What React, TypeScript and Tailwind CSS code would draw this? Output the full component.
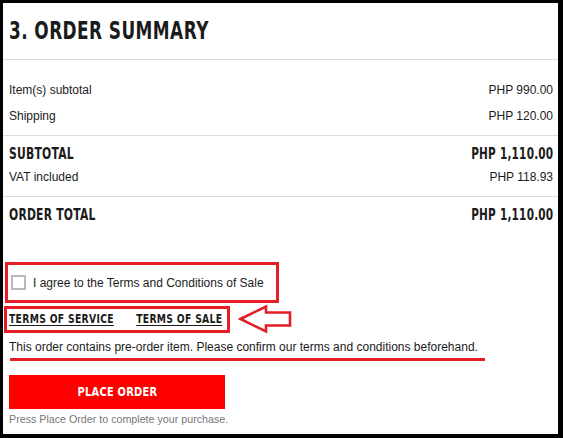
const bold = "font-['DejaVu_Sans',sans-serif] font-bold text-[#1b1b1b]";

// condensed look: DejaVu Bold squeezed horizontally
const Cond = ({ children, className = "" }: { children: React.ReactNode; className?: string }) => (
  <span className={`inline-block ${className}`}>{children}</span>
);

const Row = ({ label, value, strong }: { label: string; value: string; strong?: boolean }) => (
  <div className="flex justify-between items-center h-[16px]">
    {strong ? (
      <>
        <Cond className={`${bold} origin-left scale-x-[0.72] text-[15px] tracking-[0.3px]`}>{label}</Cond>
        <Cond className={`${bold} origin-right scale-x-[0.70] text-[15px] tracking-[0.3px]`}>{value}</Cond>
      </>
    ) : (
      <>
        <span className="text-[12px] text-[#1b1b1b]">{label}</span>
        <span className="text-[12px] text-[#1b1b1b]">{value}</span>
      </>
    )}
  </div>
);

const LeftArrow = () => (
  <svg width="54" height="30" viewBox="0 0 54 30" className="shrink-0">
    <path d="M2.5 15 L28 2.5 L28 8.5 L52 8.5 L52 21.5 L28 21.5 L28 27.5 Z" fill="none" stroke="#e31e24" strokeWidth="2.6" />
  </svg>
);

export default function App() {
  return (
    <div className="w-[563px] h-[438px] bg-white border-black border-t-[3px] border-l-[3px] border-r-[5px] border-b-[4px] font-['Liberation_Sans',Arial,sans-serif] overflow-hidden">
      <div className="h-[57px] border-b border-[#dcdcdc] flex items-center pl-[6px]">
        <h2 className="leading-none">
          <Cond className={`${bold} origin-left scale-x-[0.705] text-[24px] tracking-[0.6px]`}>3. ORDER SUMMARY</Cond>
        </h2>
      </div>

      <div className="pl-[6px] pr-[5px] pt-[22px] pb-[11px] flex flex-col gap-[10px] border-b border-[#dcdcdc]">
        <Row label="Item(s) subtotal" value="PHP 990.00" />
        <Row label="Shipping" value="PHP 120.00" />
      </div>
      <div className="pl-[6px] pr-[5px] pt-[10px] pb-[11px] flex flex-col gap-[7px] border-b border-[#dcdcdc]">
        <Row label="SUBTOTAL" value="PHP 1,110.00" strong />
        <Row label="VAT included" value="PHP 118.93" />
      </div>
      <div className="pl-[6px] pr-[5px] pt-[10px]">
        <Row label="ORDER TOTAL" value="PHP 1,110.00" strong />
      </div>

      <div className="mt-[39px] ml-[2px] w-[274px] h-[41px] border-[3px] border-[#e31e24] flex items-center gap-[7px] pl-[3px]">
        <span className="w-[15px] h-[15px] border-2 border-[#b8b8b8] bg-white shrink-0" />
        <span className="text-[12px] text-[#1b1b1b] whitespace-nowrap">I agree to the Terms and Conditions of Sale</span>
      </div>

      <div className="flex items-center mt-[1px] ml-[1px] gap-[8px]">
        <div className="w-[226px] h-[27px] border-[3px] border-[#e31e24] flex items-center pl-[2px]">
          <div className="flex gap-[29px] origin-left scale-x-[0.77] whitespace-nowrap">
            <a className={`${bold} text-[12px] tracking-[0.4px] underline underline-offset-2`}>TERMS OF SERVICE</a>
            <a className={`${bold} text-[12px] tracking-[0.4px] underline underline-offset-2`}>TERMS OF SALE</a>
          </div>
        </div>
        <LeftArrow />
      </div>

      <div className="pl-[6px] mt-[5px]">
        <p className="text-[12px] text-[#1b1b1b] leading-[16px] whitespace-nowrap">This order contains pre-order item. Please confirm our terms and conditions beforehand.</p>
        <div className="w-[475px] h-[3px] bg-[#e31e24] mt-[3px] ml-[1px]" />

        <button className="mt-[14px] w-[216px] h-[34px] bg-[#ff0000] flex items-center justify-center">
          <Cond className="font-['DejaVu_Sans',sans-serif] font-bold text-white text-[13px] tracking-[0.3px] scale-x-[0.76]">PLACE ORDER</Cond>
        </button>
        <p className="text-[10.7px] text-[#777777] leading-[14px] mt-[3px]">Press Place Order to complete your purchase.</p>
      </div>
    </div>
  );
}
